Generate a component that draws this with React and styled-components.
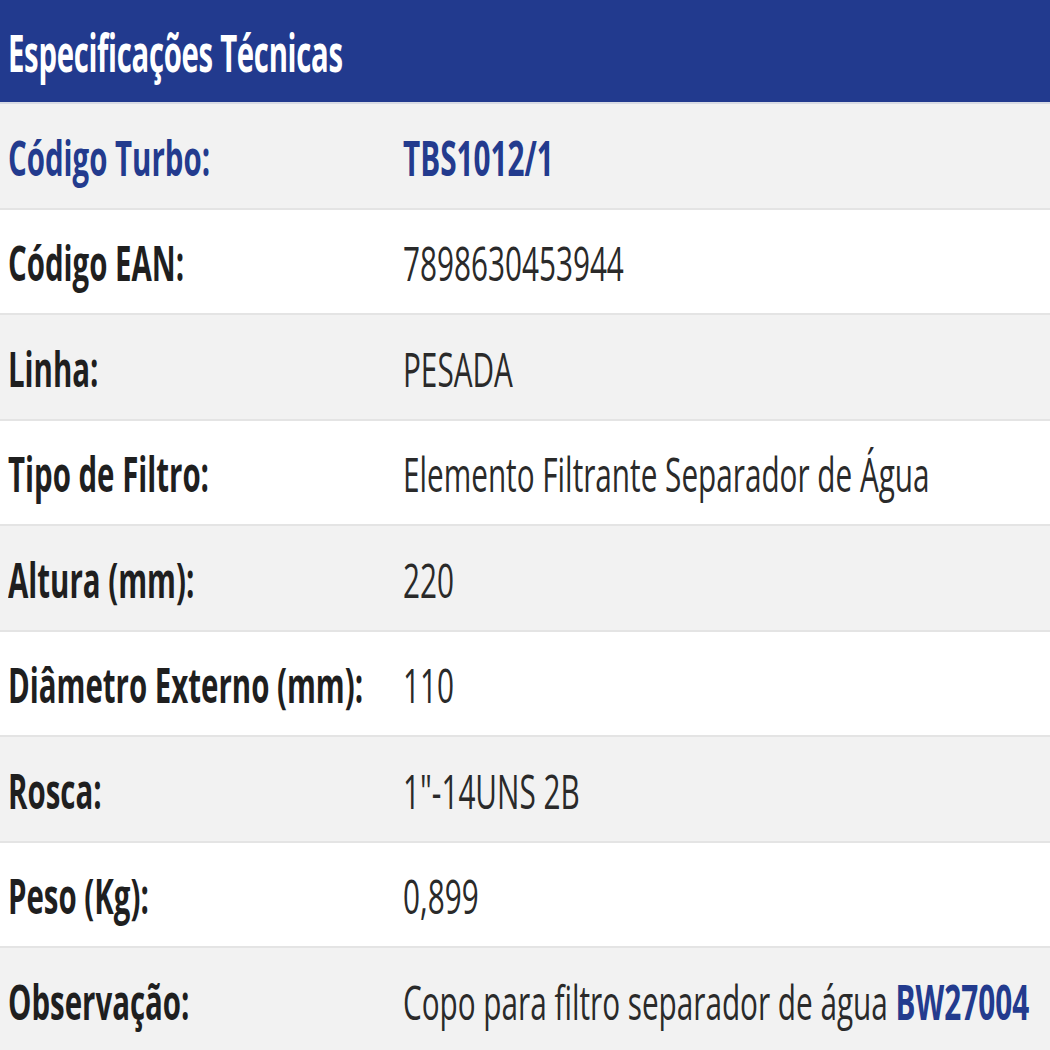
import React from 'react';
import styled, { createGlobalStyle } from 'styled-components';

const GlobalStyle = createGlobalStyle`
  html, body {
    margin: 0;
    padding: 0;
    background: #ffffff;
    overflow: hidden;
  }
  body {
    font-family: 'Open Sans', 'Noto Sans', 'Liberation Sans', sans-serif;
  }
`;

const SpecTable = styled.section`
  width: 1050px;
  display: flex;
  flex-direction: column;
`;

const Header = styled.div`
  height: 104px;
  box-sizing: border-box;
  background: #223a8e;
  display: flex;
  align-items: center;
  padding-left: 8px;
  border-bottom: 2px solid #d8dbe4;
`;

// the reference text is narrow and tall, so each run of text is squeezed sideways
const Squeeze = styled.span`
  display: inline-block;
  white-space: nowrap;
  transform: scaleX(${p => p.$sx || 0.615});
  transform-origin: left center;
`;

const HeaderTitle = styled(Squeeze)`
  color: #ffffff;
  font-size: 52px;
  font-weight: 700;
  letter-spacing: -0.5px;
`;

const Row = styled.div`
  height: 105.5px;
  box-sizing: border-box;
  display: grid;
  grid-template-columns: 395px 1fr;
  align-items: center;
  padding-left: 8px;
  padding-top: 3px;
  background: ${p => (p.$shaded ? '#f2f2f2' : '#ffffff')};
  border-bottom: 2px solid #e4e4e4;
`;

const Label = styled(Squeeze)`
  font-size: 48px;
  font-weight: 700;
  color: ${p => (p.$accent ? '#233b8e' : '#1f1f1f')};
`;

const Value = styled(Squeeze)`
  font-size: 48px;
  font-weight: ${p => (p.$accent ? 700 : 400)};
  color: ${p => (p.$accent ? '#233b8e' : '#2a2a2a')};
`;

const Strong = styled.b`
  font-weight: 700;
  color: #233b8e;
`;

const specs = [
  { label: 'Código Turbo:', value: 'TBS1012/1', accent: true },
  { label: 'Código EAN:', value: '7898630453944' },
  { label: 'Linha:', value: 'PESADA' },
  { label: 'Tipo de Filtro:', value: 'Elemento Filtrante Separador de Água' },
  { label: 'Altura (mm):', value: '220' },
  { label: 'Diâmetro Externo (mm):', value: '110' },
  { label: 'Rosca:', value: '1"-14UNS 2B' },
  { label: 'Peso (Kg):', value: '0,899' },
  {
    label: 'Observação:',
    value: (
      <>
        Copo para filtro separador de água <Strong>BW27004</Strong>
      </>
    ),
  },
];

export default function App() {
  return (
    <>
      <GlobalStyle />
      <SpecTable>
        <Header>
          <HeaderTitle $sx={0.563}>Especificações Técnicas</HeaderTitle>
        </Header>
        {specs.map((s, i) => (
          <Row key={s.label} $shaded={i % 2 === 0}>
            <Label $accent={s.accent} $sx={0.613}>{s.label}</Label>
            <Value $accent={s.accent} $sx={0.619}>{s.value}</Value>
          </Row>
        ))}
      </SpecTable>
    </>
  );
}
